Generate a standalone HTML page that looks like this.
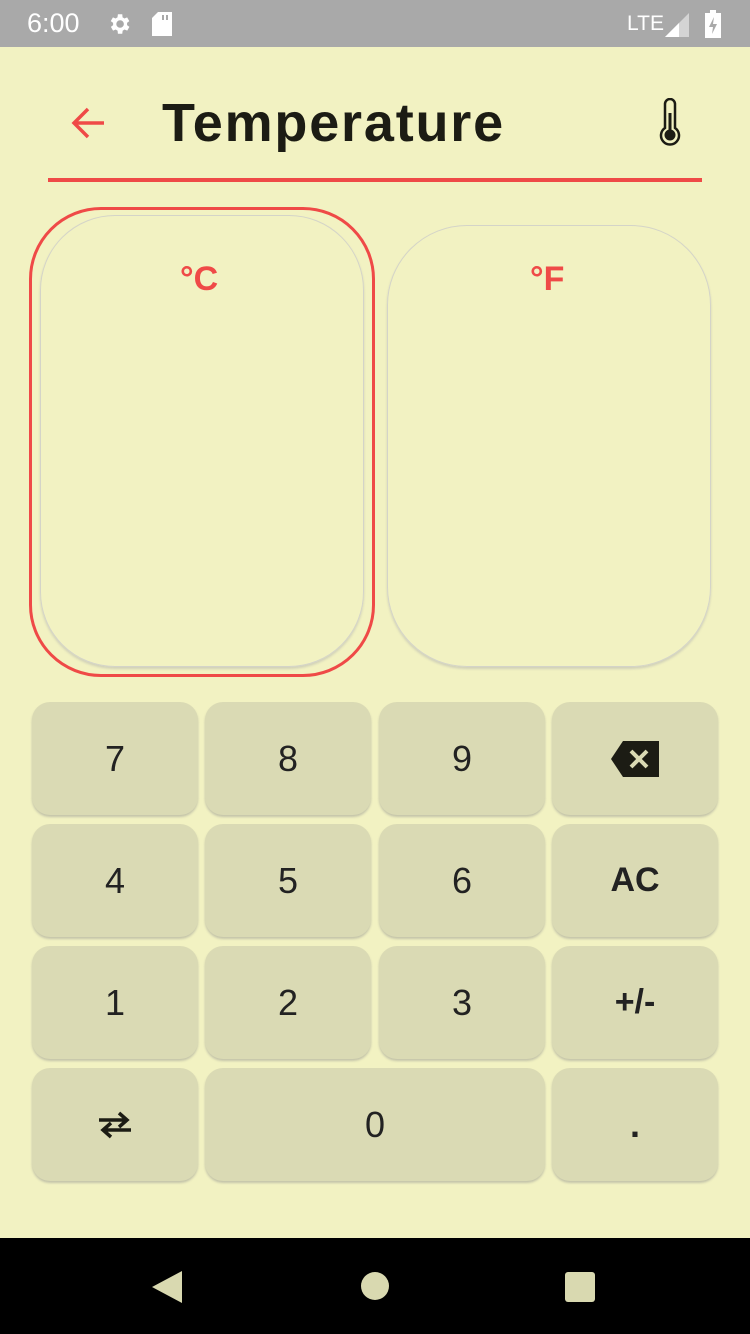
<!DOCTYPE html>
<html><head><meta charset="utf-8"><style>
*{margin:0;padding:0;box-sizing:border-box}
body{width:750px;height:1334px;background:#f2f2c2;position:relative;overflow:hidden;font-family:"Liberation Sans",sans-serif}
.sb{position:absolute;left:0;top:0;width:750px;height:47px;background:#a9a9a9;color:#fff}
.title{position:absolute;left:162px;top:92px;font-size:54px;font-weight:bold;color:#1c1c14;letter-spacing:1.8px}
.line{position:absolute;left:48px;top:178px;width:654px;height:4px;background:#ef4a47}
.red{position:absolute;left:29px;top:207px;width:346px;height:470px;border:3px solid #ef4a47;border-radius:72px}
.card{position:absolute;border:1px solid #d4d4c8;border-radius:75px;box-shadow:0 2px 2px rgba(150,150,170,.35)}
.lab{position:absolute;font-size:34px;font-weight:bold;color:#ef4a47}
.k{position:absolute;width:166px;height:113px;background:#dadab4;border-radius:18px;box-shadow:0 2px 2px rgba(140,140,140,.45);display:flex;align-items:center;justify-content:center;font-size:36px;color:#222}
.nav{position:absolute;left:0;top:1238px;width:750px;height:96px;background:#000}
</style></head><body>
<div class="sb">
<span style="position:absolute;left:27px;top:8px;font-size:27px">6:00</span>
<svg style="position:absolute;left:106px;top:11px" width="26" height="26" viewBox="0 0 24 24"><path fill="#fff" d="M19.4 13a7.5 7.5 0 000-2l2.1-1.6-2-3.5-2.5 1a7 7 0 00-1.7-1L15 3h-4l-.4 2.9a7 7 0 00-1.7 1l-2.5-1-2 3.5L6.6 11a7.5 7.5 0 000 2l-2.1 1.6 2 3.5 2.5-1a7 7 0 001.7 1L11 21h4l.4-2.9a7 7 0 001.7-1l2.5 1 2-3.5zM13 15.5a3.5 3.5 0 110-7 3.5 3.5 0 010 7z"/></svg>
<svg style="position:absolute;left:152px;top:12px" width="22" height="24" viewBox="0 0 22 24"><path fill="#fff" d="M6 0h14v24H0V6z"/><rect x="10" y="3" width="2" height="5" fill="#a9a9a9"/><rect x="14" y="3" width="2" height="5" fill="#a9a9a9"/></svg>
<span style="position:absolute;left:627px;top:12px;font-size:21px">LTE</span>
<svg style="position:absolute;left:665px;top:13px" width="24" height="24"><path fill="#fff" d="M24 0v24H0z" opacity=".5"/><path fill="#fff" d="M14 10v14H0z"/></svg>
<svg style="position:absolute;left:705px;top:10px" width="16" height="28"><rect x="5" y="0" width="6" height="3" fill="#fff"/><rect x="0" y="3" width="16" height="25" fill="#fff"/><path d="M9 7l-5 10h4l-1 7 5-10H8z" fill="#a9a9a9"/></svg>
</div>
<svg style="position:absolute;left:70px;top:106px" width="36" height="34" viewBox="0 0 36 34"><path d="M34 17H4M18 3L4 17l14 14" stroke="#ef4a47" stroke-width="3.5" fill="none"/></svg>
<div class="title">Temperature</div>
<svg style="position:absolute;left:657px;top:98px" width="26" height="48" viewBox="0 0 26 48"><path d="M8 6a5 5 0 0110 0v24a9 9 0 11-10 0z" stroke="#1c1c14" stroke-width="2.5" fill="none"/><rect x="11.5" y="15" width="3" height="18" fill="#1c1c14"/><circle cx="13" cy="37" r="5.5" fill="#1c1c14"/></svg>
<div class="line"></div>
<div class="red"></div>
<div class="card" style="left:40px;top:215px;width:324px;height:452px"></div>
<div class="card" style="left:387px;top:225px;width:324px;height:442px;border-radius:80px"></div>
<div class="lab" style="left:180px;top:260px">°C</div>
<div class="lab" style="left:530px;top:260px">°F</div>

<div class="k" style="left:32px;top:702px">7</div>
<div class="k" style="left:205px;top:702px">8</div>
<div class="k" style="left:379px;top:702px">9</div>
<div class="k" style="left:552px;top:702px"><svg width="48" height="36" viewBox="0 0 48 36"><path d="M12 0h36v36H12L0 18z" fill="#1c1c14"/><path d="M20 10l16 16M36 10L20 26" stroke="#dadab4" stroke-width="4"/></svg></div>
<div class="k" style="left:32px;top:824px">4</div>
<div class="k" style="left:205px;top:824px">5</div>
<div class="k" style="left:379px;top:824px">6</div>
<div class="k" style="left:552px;top:824px;font-weight:bold;font-size:34px">AC</div>
<div class="k" style="left:32px;top:946px">1</div>
<div class="k" style="left:205px;top:946px">2</div>
<div class="k" style="left:379px;top:946px">3</div>
<div class="k" style="left:552px;top:946px;font-weight:bold;font-size:34px">+/-</div>
<div class="k" style="left:32px;top:1068px"><svg width="36" height="28" viewBox="0 0 36 28"><path d="M2 9h28M22 2l8 7-8 7M34 19H6M14 12l-8 7 8 7" stroke="#1c1c14" stroke-width="3.5" fill="none"/></svg></div>
<div class="k" style="left:205px;top:1068px;width:340px">0</div>
<div class="k" style="left:552px;top:1068px;font-weight:bold">.</div>
<div class="nav">
<svg style="position:absolute;left:152px;top:33px" width="30" height="32"><path d="M30 0v32L0 16z" fill="#d9d9b0"/></svg>
<div style="position:absolute;left:361px;top:34px;width:28px;height:28px;border-radius:50%;background:#d9d9b0"></div>
<div style="position:absolute;left:565px;top:34px;width:30px;height:30px;border-radius:3px;background:#d9d9b0"></div>
</div>
</body></html>
